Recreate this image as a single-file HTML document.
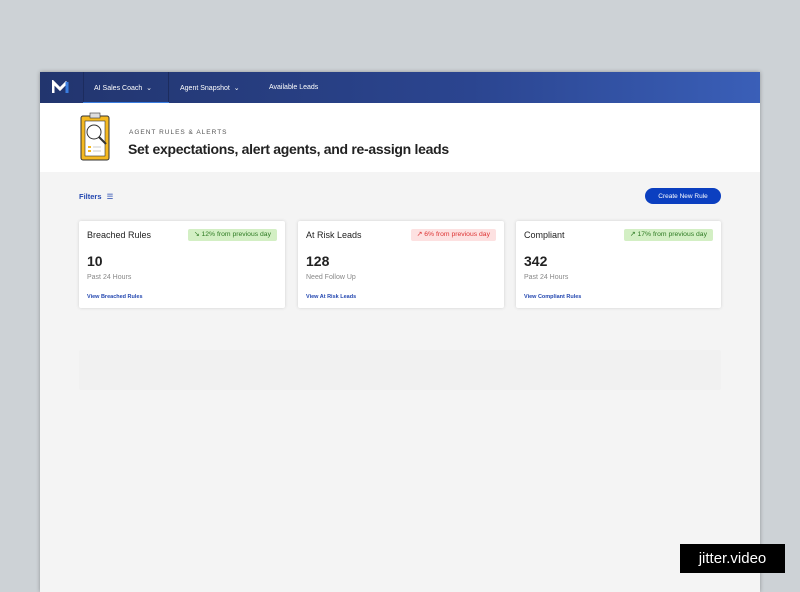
<!DOCTYPE html>
<html><head><style>
*{margin:0;padding:0;box-sizing:border-box}
body{width:800px;height:588px;background:#cdd2d6;font-family:"Liberation Sans",sans-serif;position:relative;overflow:hidden}
.win{position:absolute;left:40px;top:72px;width:720px;height:520px;background:#f4f4f4;box-shadow:0 0 4px rgba(0,0,0,.3)}
.nav{height:31px;background:linear-gradient(90deg,#22356e,#2b4590 60%,#3a5fb8);position:relative;color:#fff;font-size:7px}
.nav span{position:absolute;top:12px}
.hdr{height:69px;background:#fff;position:relative}
.card{position:absolute;top:149px;width:206px;height:87px;background:#fff;border-radius:2px;box-shadow:0 0 3px rgba(0,0,0,.15)}
.card .t{position:absolute;left:8px;top:9px;font-size:9px;color:#222}
.card .n{position:absolute;left:8px;top:32px;font-size:14px;font-weight:bold;color:#222}
.card .s{position:absolute;left:8px;top:53px;font-size:7px;color:#888}
.card .l{position:absolute;left:8px;top:73px;font-size:5.5px;color:#2347b0;font-weight:bold}
.badge{position:absolute;right:8px;top:8px;height:12px;padding:0 6px;font-size:6.8px;line-height:12px;border-radius:2px;white-space:nowrap}
.g{background:#d3efc4;color:#2d7a22}.r{background:#fde1e1;color:#d33}
.btn{position:absolute;left:605px;top:116px;width:76px;height:16px;border-radius:8px;background:#0b3fc0;color:#fff;font-size:6.5px;display:flex;align-items:center;justify-content:center}
</style></head><body>
<div class="win">
<div class="nav">
<svg style="position:absolute;left:12px;top:8px" width="18" height="14" viewBox="0 0 18 14"><path d="M1 13V2l7 7 7-7" stroke="#fff" stroke-width="3" fill="none"/><path d="M15 2v11" stroke="#3a7de0" stroke-width="3"/></svg>
<div style="position:absolute;left:43px;top:0;width:86px;height:31px;border-left:1px solid #1c2c5e;border-right:1px solid #1c2c5e"></div>
<div style="position:absolute;left:43px;top:30px;width:86px;height:2px;background:#3a7de0"></div>
<span style="left:54px">AI Sales Coach &nbsp;⌄</span>
<span style="left:140px">Agent Snapshot &nbsp;⌄</span>
<span style="left:229px">Available Leads</span>
</div>
<div class="hdr">
<svg style="position:absolute;left:38px;top:9px" width="36" height="52" viewBox="0 0 36 52"><rect x="3" y="4" width="28" height="44" rx="2" fill="#f5b921" stroke="#333" stroke-width="1"/><rect x="7" y="9" width="20" height="35" fill="#fff" stroke="#333" stroke-width=".6"/><rect x="12" y="1" width="10" height="5" fill="#ddd" stroke="#333" stroke-width=".6"/><circle cx="16" cy="20" r="7" fill="none" stroke="#333"/><path d="M21 25l7 7" stroke="#333" stroke-width="2"/><rect x="10" y="34" width="3" height="2" fill="#f5b921"/><rect x="10" y="38" width="3" height="2" fill="#f5b921"/><path d="M15 35h8M15 39h8" stroke="#999" stroke-width=".6"/></svg>
<div style="position:absolute;left:89px;top:26px;font-size:6.5px;letter-spacing:1px;color:#555">AGENT RULES &amp; ALERTS</div>
<div style="position:absolute;left:88px;top:38px;font-size:14px;color:#222;font-weight:bold;letter-spacing:-.3px">Set expectations, alert agents, and re-assign leads</div>
</div>
<div style="position:absolute;left:39px;top:120px;font-size:7.5px;color:#2347b0;font-weight:bold">Filters <span style="font-weight:normal;margin-left:3px">☰</span></div>
<div class="btn">Create New Rule</div>
<div class="card" style="left:39px"><div class="t">Breached Rules</div><div class="badge g">↘ 12% from previous day</div><div class="n">10</div><div class="s">Past 24 Hours</div><div class="l">View Breached Rules</div></div>
<div class="card" style="left:258px"><div class="t">At Risk Leads</div><div class="badge r">↗ 6% from previous day</div><div class="n">128</div><div class="s">Need Follow Up</div><div class="l">View At Risk Leads</div></div>
<div class="card" style="left:476px;width:205px"><div class="t">Compliant</div><div class="badge g">↗ 17% from previous day</div><div class="n">342</div><div class="s">Past 24 Hours</div><div class="l">View Compliant Rules</div></div>
<div style="position:absolute;left:39px;top:278px;width:642px;height:40px;background:#f1f1f1;border-radius:2px"></div>
</div>
<div style="position:absolute;left:680px;top:544px;width:105px;height:29px;background:#000;color:#fff;font-size:15px;text-align:center;line-height:29px">jitter.video</div>
</body></html>
